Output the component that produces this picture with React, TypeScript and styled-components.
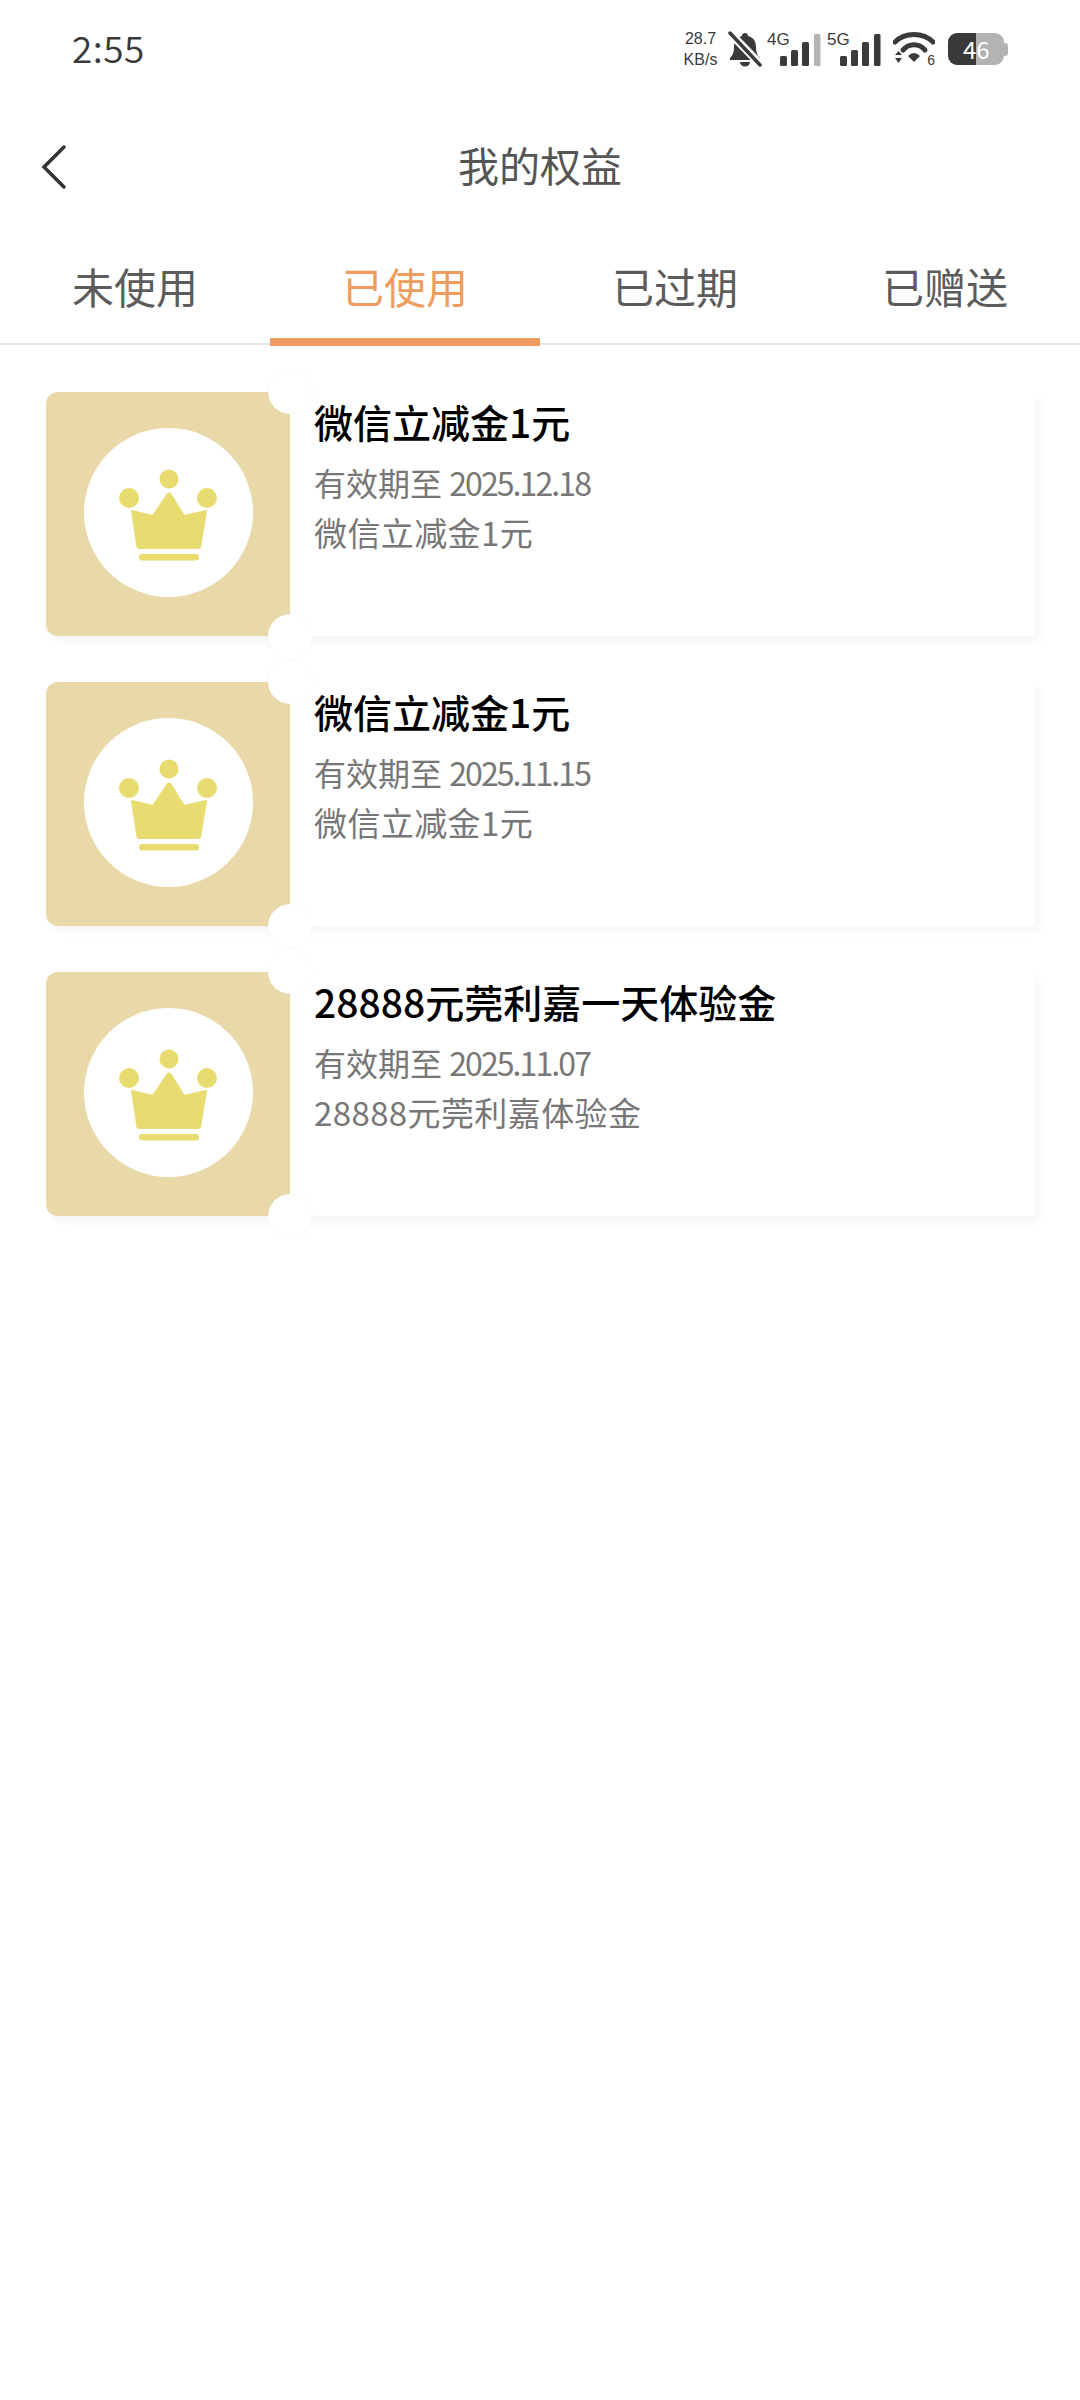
import React from 'react';
import styled, { createGlobalStyle } from 'styled-components';

const GlobalStyle = createGlobalStyle`
  html, body {
    margin: 0;
    padding: 0;
    background: #fff;
  }
  * {
    box-sizing: border-box;
  }
`;

const FONT = `"Noto Sans CJK SC", "Noto Sans", sans-serif`;

const Page = styled.div`
  width: 1080px;
  min-height: 2400px;
  background: #fff;
  font-family: ${FONT};
  overflow: hidden;
`;

const StatusBar = styled.div`
  height: 100px;
  padding: 0 72px;
  display: flex;
  align-items: center;
  justify-content: space-between;
`;

const Time = styled.div`
  font-size: 37px;
  font-weight: 350;
  letter-spacing: 0.5px;
  color: #3a3a3a;
  line-height: 94px;
  height: 100px;
`;

const StatusIcons = styled.div`
  display: flex;
  align-items: center;
  height: 36px;
  margin-top: -2px;
`;

const Speed = styled.div`
  width: 33px;
  font-size: 16px;
  line-height: 21px;
  color: #3a3a3a;
  white-space: nowrap;
  display: flex;
  flex-direction: column;
  align-items: center;
  font-family: "Liberation Sans", sans-serif;
`;

const StatusIcon = styled.svg<{ $left: number }>`
  display: block;
  flex: none;
  margin-left: ${(p) => p.$left}px;
`;

const Wifi = styled.div`
  position: relative;
  flex: none;
  width: 42px;
  height: 36px;
  margin-left: 12px;
`;

const WifiBadge = styled.span`
  position: absolute;
  right: 0;
  bottom: 0;
  font-family: "Liberation Sans", sans-serif;
  font-size: 14px;
  line-height: 14px;
  color: #3a3a3a;
`;

const Battery = styled.div`
  margin-left: 13px;
  width: 56px;
  height: 32px;
  padding-left: 15px;
  border-radius: 9px;
  background: linear-gradient(90deg, #3a3a3a 0 28px, #b3b3b3 28px 100%);
  color: #fff;
  font-size: 24px;
  line-height: 32px;
`;

const BatteryCap = styled.div`
  width: 4px;
  height: 13px;
  background: #b3b3b3;
  border-radius: 0 3px 3px 0;
`;

const NavBar = styled.div`
  height: 134px;
  display: flex;
  align-items: center;
  justify-content: center;
  position: relative;
`;

const BackIcon = styled.svg`
  position: absolute;
  left: 40px;
  top: 44px;
`;

const NavTitle = styled.div`
  font-size: 41px;
  color: #555;
  line-height: 56px;
  margin-top: -6px;
`;

const Tabs = styled.div`
  height: 111px;
  display: grid;
  grid-template-columns: repeat(4, 270px);
  border-bottom: 2px solid #e6e6e6;
`;

const Tab = styled.div<{ $active?: boolean }>`
  position: relative;
  height: 111px;
  padding-top: 23px;
  text-align: center;
  font-size: 42px;
  line-height: 58px;
  color: ${(p) => (p.$active ? '#ee9c60' : '#5c5c5c')};

  ${(p) =>
    p.$active &&
    `
    &::after {
      content: '';
      position: absolute;
      left: 0;
      right: 0;
      bottom: -1px;
      height: 8px;
      background: #ee9c60;
    }
  `}
`;

const List = styled.div`
  padding: 47px 45px 0 46px;
  display: flex;
  flex-direction: column;
  gap: 46px;
`;

const Card = styled.div`
  position: relative;
  height: 244px;
  display: flex;
  background: #fff;
  box-shadow: 4px 6px 10px rgba(0, 0, 0, 0.04);
  border-radius: 12px 0 0 12px;
`;

const Side = styled.div`
  position: relative;
  width: 244px;
  flex: none;
  display: flex;
  align-items: center;
  justify-content: center;
  padding-bottom: 3px;
  background: #e9d9a9;
  border-radius: 12px 0 0 12px;
`;

const Notch = styled.div<{ $bottom?: boolean }>`
  position: absolute;
  right: -22px;
  ${(p) => (p.$bottom ? 'bottom: -22px;' : 'top: -22px;')}
  width: 44px;
  height: 44px;
  border-radius: 50%;
  background: #fff;
  box-shadow: 0 0 3px rgba(0, 0, 0, 0.05);
`;

const Medal = styled.div`
  width: 169px;
  height: 169px;
  border-radius: 50%;
  background: #fff;
  display: flex;
  align-items: center;
  justify-content: center;
`;

const Body = styled.div`
  flex: 1;
  padding: 7px 0 0 24px;
`;

const Title = styled.div`
  font-size: 39px;
  font-weight: 500;
  line-height: 44px;
  color: #000;
`;

const Expiry = styled.div`
  margin-top: 17px;
  font-size: 32px;
  line-height: 44px;
  color: #777;
`;

const ExpiryDate = styled.span`
  letter-spacing: -1.9px;
`;

const Desc = styled.div`
  margin-top: 6px;
  font-size: 33px;
  letter-spacing: 0.4px;
  line-height: 44px;
  color: #777;
`;

const coupons = [
  { title: '微信立减金1元', date: '2025.12.18', desc: '微信立减金1元' },
  { title: '微信立减金1元', date: '2025.11.15', desc: '微信立减金1元' },
  { title: '28888元莞利嘉一天体验金', date: '2025.11.07', desc: '28888元莞利嘉体验金' },
];

const tabs = ['未使用', '已使用', '已过期', '已赠送'];

function Crown() {
  return (
    <svg width="168" height="168" viewBox="0 0 168 168" fill="#e8dc70">
      <circle cx="85" cy="50" r="9.5" />
      <circle cx="45" cy="69" r="10" />
      <circle cx="123" cy="69" r="10" />
      <path
        d="M48 82 L69 87 L83 66 Q85 63 87 66 L100 87 L122 82 L116 118 Q115.500 119 113 119 L56 119 Q54 119 53.500 118 Z"
        stroke="#e8dc70"
        strokeWidth="2"
        strokeLinejoin="round"
      />
      <rect x="55" y="125" width="60" height="6.500" rx="3" />
    </svg>
  );
}

function Signal({ label, left, lastColor }: { label: string; left: number; lastColor: string }) {
  return (
    <StatusIcon $left={left} width="54" height="36" viewBox="0 0 54 36">
      <text x="0" y="14" fontSize="17" fill="#3a3a3a" fontFamily="Liberation Sans, sans-serif">
        {label}
      </text>
      <rect x="13" y="25" width="7" height="10" rx="1.500" fill="#3a3a3a" />
      <rect x="24" y="19" width="7" height="16" rx="1.500" fill="#3a3a3a" />
      <rect x="35" y="11" width="7" height="24" rx="1.500" fill="#3a3a3a" />
      <rect x="47" y="3" width="6.500" height="32" rx="1.500" fill={lastColor} />
    </StatusIcon>
  );
}

export default function App() {
  return (
    <Page>
      <GlobalStyle />
      <StatusBar>
        <Time>2:55</Time>
        <StatusIcons>
          <Speed>
            <span>28.7</span>
            <span>KB/s</span>
          </Speed>
          <StatusIcon $left={11} width="34" height="36" viewBox="0 0 34 36">
            <path
              d="M17 2 a3 3 0 0 1 3 3 c6 1.500 8 6 8 11 c0 5 1 8 4 11 v2 H2 v-2 c3 -3 4 -6 4 -11 c0 -5 2 -9.500 8 -11 a3 3 0 0 1 3 -3 Z M12 31 h10 a5 4.500 0 0 1 -10 0 Z"
              fill="#3a3a3a"
            />
            <path d="M1 1 L34 35" stroke="#fff" strokeWidth="8" />
            <path d="M2 2 L32 34" stroke="#3a3a3a" strokeWidth="3.500" strokeLinecap="round" />
          </StatusIcon>
          <Signal label="4G" left={5} lastColor="#b3b3b3" />
          <Signal label="5G" left={6} lastColor="#3a3a3a" />
          <Wifi>
            <svg width="42" height="36" viewBox="0 0 42 36">
              <path d="M2 11 C12 1 30 1 40 11" fill="none" stroke="#3a3a3a" strokeWidth="5" strokeLinecap="round" />
              <path d="M10 19 C16 12 26 12 32 19" fill="none" stroke="#3a3a3a" strokeWidth="5" strokeLinecap="round" />
              <path d="M15 25 Q21 19 27 25 L21 31 Z" fill="#3a3a3a" />
              <path d="M2 24 L5.500 20 L9 24 Z M2 27 L9 27 L5.500 32 Z" fill="#3a3a3a" />
            </svg>
            <WifiBadge>6</WifiBadge>
          </Wifi>
          <Battery>46</Battery>
          <BatteryCap />
        </StatusIcons>
      </StatusBar>
      <NavBar>
        <BackIcon width="28" height="50" viewBox="0 0 28 50" fill="none">
          <path d="M24 3 L4 23 L24 43" stroke="#333" strokeWidth="3.500" strokeLinecap="round" strokeLinejoin="miter" />
        </BackIcon>
        <NavTitle>我的权益</NavTitle>
      </NavBar>
      <Tabs>
        {tabs.map((t, i) => (
          <Tab key={t} $active={i === 1}>
            {t}
          </Tab>
        ))}
      </Tabs>
      <List>
        {coupons.map((c, i) => (
          <Card key={i}>
            <Side>
              <Medal>
                <Crown />
              </Medal>
              <Notch />
              <Notch $bottom />
            </Side>
            <Body>
              <Title>{c.title}</Title>
              <Expiry>
                有效期至 <ExpiryDate>{c.date}</ExpiryDate>
              </Expiry>
              <Desc>{c.desc}</Desc>
            </Body>
          </Card>
        ))}
      </List>
    </Page>
  );
}
